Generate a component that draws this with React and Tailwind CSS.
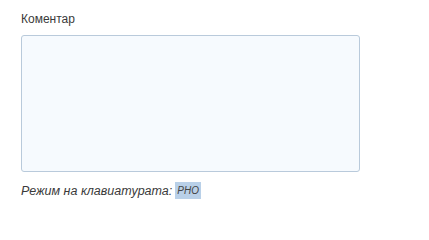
import React from 'react';

export default function App() {
  return (
    <div className="w-[429px] h-[213px] bg-white pl-[21px] pt-[11px]" style={{ fontFamily: '"Liberation Sans", Arial, sans-serif' }}>
      <label className="block text-[12px] leading-[16px] text-[#3a3a3a]">Коментар</label>
      <textarea className="block mt-[8px] w-[339px] h-[137px] bg-[#f6fafe] border border-[#b9cadb] rounded-[3px] resize-none outline-none" />
      <div className="mt-[10px] text-[12.5px] leading-[16px] italic text-[#3a3a3a] flex items-center">
        <span>Режим на клавиатурата:</span>
        <span className="ml-[3px] bg-[#b9d0e8] px-[2px] text-[10px] leading-[15px] py-[1px] text-[#444]">РНО</span>
      </div>
    </div>
  );
}
